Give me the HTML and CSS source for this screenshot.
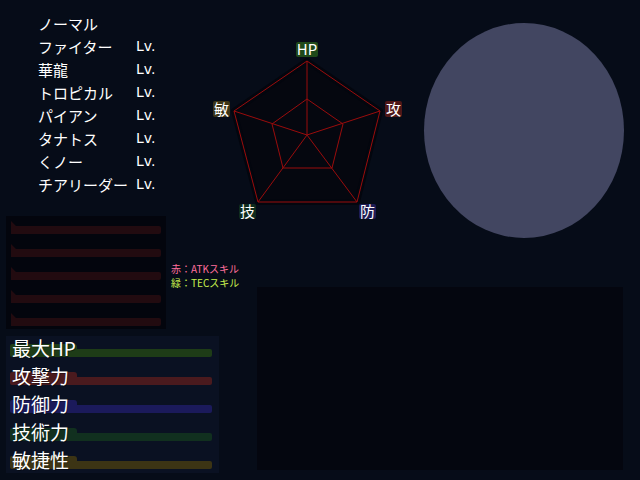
FILE: index.html
```html
<!DOCTYPE html>
<html lang="ja">
<head>
<meta charset="utf-8">
<link rel="stylesheet" href="styles.css">
</head>
<body>
<div class="screen">
  <div class="top">
    <div class="list">
      <div class="name">ノーマル</div><div class="lv"></div>
      <div class="name">ファイター</div><div class="lv">Lv.</div>
      <div class="name">華龍</div><div class="lv">Lv.</div>
      <div class="name">トロピカル</div><div class="lv">Lv.</div>
      <div class="name">パイアン</div><div class="lv">Lv.</div>
      <div class="name">タナトス</div><div class="lv">Lv.</div>
      <div class="name">くノー</div><div class="lv">Lv.</div>
      <div class="name">チアリーダー</div><div class="lv">Lv.</div>
    </div>
    <svg class="radar" width="211" height="216" viewBox="213 0 211 216">
      <polygon class="rad-bg" points="307,61 380,111 357,202 258,202 234,111"/>
      <polygon class="rad-line" points="307,61 380,111 357,202 258,202 234,111"/>
      <polygon class="rad-line" points="307,99 343,124 332,168 283,168 272,124"/>
      <line class="rad-line" x1="307" y1="135" x2="307" y2="61"/>
      <line class="rad-line" x1="307" y1="135" x2="380" y2="111"/>
      <line class="rad-line" x1="307" y1="135" x2="357" y2="202"/>
      <line class="rad-line" x1="307" y1="135" x2="258" y2="202"/>
      <line class="rad-line" x1="307" y1="135" x2="234" y2="111"/>
      <rect class="lb-hp" x="296" y="42" width="22" height="15" rx="2"/>
      <text class="lbl" x="307" y="55">HP</text>
      <rect class="lb-atk" x="385" y="101" width="17" height="16" rx="2"/>
      <text class="lbl" x="393.5" y="114.5">攻</text>
      <rect class="lb-def" x="359" y="204" width="17" height="15" rx="2"/>
      <text class="lbl" x="367.5" y="217">防</text>
      <rect class="lb-tec" x="239" y="204" width="17" height="15" rx="2"/>
      <text class="lbl" x="247.5" y="217">技</text>
      <rect class="lb-agi" x="213" y="101" width="17" height="16" rx="2"/>
      <text class="lbl" x="221.5" y="114.5">敏</text>
    </svg>
    <div class="orb"></div>
  </div>
  <div class="bottom">
    <div class="left">
      <div class="skill-row">
        <div class="skills">
          <svg class="skill" width="150" height="13" viewBox="0 0 150 13"><path d="M0 0 L5 5 H148 Q150 5 150 7 V11 Q150 13 148 13 H0 Z"/></svg>
          <svg class="skill" width="150" height="13" viewBox="0 0 150 13"><path d="M0 0 L5 5 H148 Q150 5 150 7 V11 Q150 13 148 13 H0 Z"/></svg>
          <svg class="skill" width="150" height="13" viewBox="0 0 150 13"><path d="M0 0 L5 5 H148 Q150 5 150 7 V11 Q150 13 148 13 H0 Z"/></svg>
          <svg class="skill" width="150" height="13" viewBox="0 0 150 13"><path d="M0 0 L5 5 H148 Q150 5 150 7 V11 Q150 13 148 13 H0 Z"/></svg>
          <svg class="skill" width="150" height="13" viewBox="0 0 150 13"><path d="M0 0 L5 5 H148 Q150 5 150 7 V11 Q150 13 148 13 H0 Z"/></svg>
        </div>
        <div class="legend">
          <div class="atk">赤：ATKスキル</div>
          <div class="tec">緑：TECスキル</div>
        </div>
      </div>
      <div class="stats">
        <div class="stat hp"><div class="bar"><div class="tab"></div><div class="fill"></div></div><div class="label">最大HP</div></div>
        <div class="stat atk"><div class="bar"><div class="tab"></div><div class="fill"></div></div><div class="label">攻撃力</div></div>
        <div class="stat def"><div class="bar"><div class="tab"></div><div class="fill"></div></div><div class="label">防御力</div></div>
        <div class="stat tec"><div class="bar"><div class="tab"></div><div class="fill"></div></div><div class="label">技術力</div></div>
        <div class="stat agi"><div class="bar"><div class="tab"></div><div class="fill"></div></div><div class="label">敏捷性</div></div>
      </div>
    </div>
    <div class="info"></div>
  </div>
</div>
</body>
</html>
```

FILE: styles.css
```css
html, body {
  margin: 0;
  padding: 0;
  background: #060c18;
}
.screen {
  width: 640px;
  height: 480px;
  overflow: hidden;
  background: #060c18;
  color: #ffffff;
  font-family: "Noto Sans CJK JP", "Noto Sans", "DejaVu Sans", sans-serif;
}
.top {
  display: flex;
  height: 216px;
}
.list {
  width: 175px;
  padding: 12px 0 0 38px;
  display: grid;
  grid-template-columns: 98px auto;
  grid-auto-rows: 23px;
  align-content: start;
  font-size: 15px;
  line-height: 23px;
}
.lv {
  font-family: "DejaVu Sans", sans-serif;
  font-size: 14px;
}
.radar {
  display: block;
  overflow: visible;
  flex: none;
}
.rad-bg {
  fill: #05070f;
  stroke: #03060e;
  stroke-width: 6;
  stroke-linejoin: round;
}
.rad-line {
  fill: none;
  stroke: #9a0c0c;
  stroke-width: 1;
}
.lbl {
  fill: #ffffff;
  font-size: 15px;
  text-anchor: middle;
  font-family: "Noto Sans CJK JP", "DejaVu Sans", sans-serif;
}
.lb-hp { fill: #1f4a1a; }
.lb-atk { fill: #4e1718; }
.lb-def { fill: #1d1c55; }
.lb-tec { fill: #0f2c1d; }
.lb-agi { fill: #3c3518; }
.orb {
  flex: none;
  width: 200px;
  height: 215px;
  margin-top: 23px;
  border-radius: 50%;
  background: #424661;
}
.bottom {
  display: flex;
  height: 264px;
}
.left {
  width: 240px;
  flex: none;
}
.skill-row {
  display: flex;
  height: 113px;
}
.skills {
  margin-left: 6px;
  width: 155px;
  height: 108px;
  padding: 5px 0 0 5px;
  background: #03050d;
  display: flex;
  flex-direction: column;
  gap: 10px;
}
.skill {
  display: block;
}
.skill path {
  fill: #220b10;
}
.legend {
  margin-left: 5px;
  padding-top: 46px;
  font-size: 10px;
  line-height: 14px;
  white-space: nowrap;
}
.legend .atk { color: #ff6f9c; }
.legend .tec { color: #c6f04e; }
.stats {
  margin: 7px 0 0 6px;
  width: 209px;
  height: 133px;
  padding: 4px 0 0 4px;
  background: #0a1122;
  display: flex;
  flex-direction: column;
}
.stat {
  display: grid;
  height: 28px;
  flex: none;
}
.stat > * {
  grid-area: 1 / 1;
}
.bar {
  display: flex;
  flex-direction: column;
  align-items: flex-start;
  padding-top: 4px;
}
.tab {
  width: 67px;
  height: 5px;
  border-radius: 2px 3px 0 0;
}
.fill {
  width: 202px;
  height: 8px;
  border-radius: 0 2px 2px 2px;
}
.label {
  margin: -2px 0 0 2px;
  font-size: 19px;
  line-height: 19px;
  color: #ffffff;
  text-shadow: 1px 1px 0 rgba(0, 0, 0, 0.35);
}
.hp .tab, .hp .fill { background: #1e3c17; }
.atk .tab, .atk .fill { background: #4a1a1e; }
.def .tab, .def .fill { background: #1b1a5b; }
.tec .tab, .tec .fill { background: #11301f; }
.agi .tab, .agi .fill { background: #3c3414; }
.info {
  margin: 71px 0 0 17px;
  width: 366px;
  height: 183px;
  background: #04060f;
}
```
